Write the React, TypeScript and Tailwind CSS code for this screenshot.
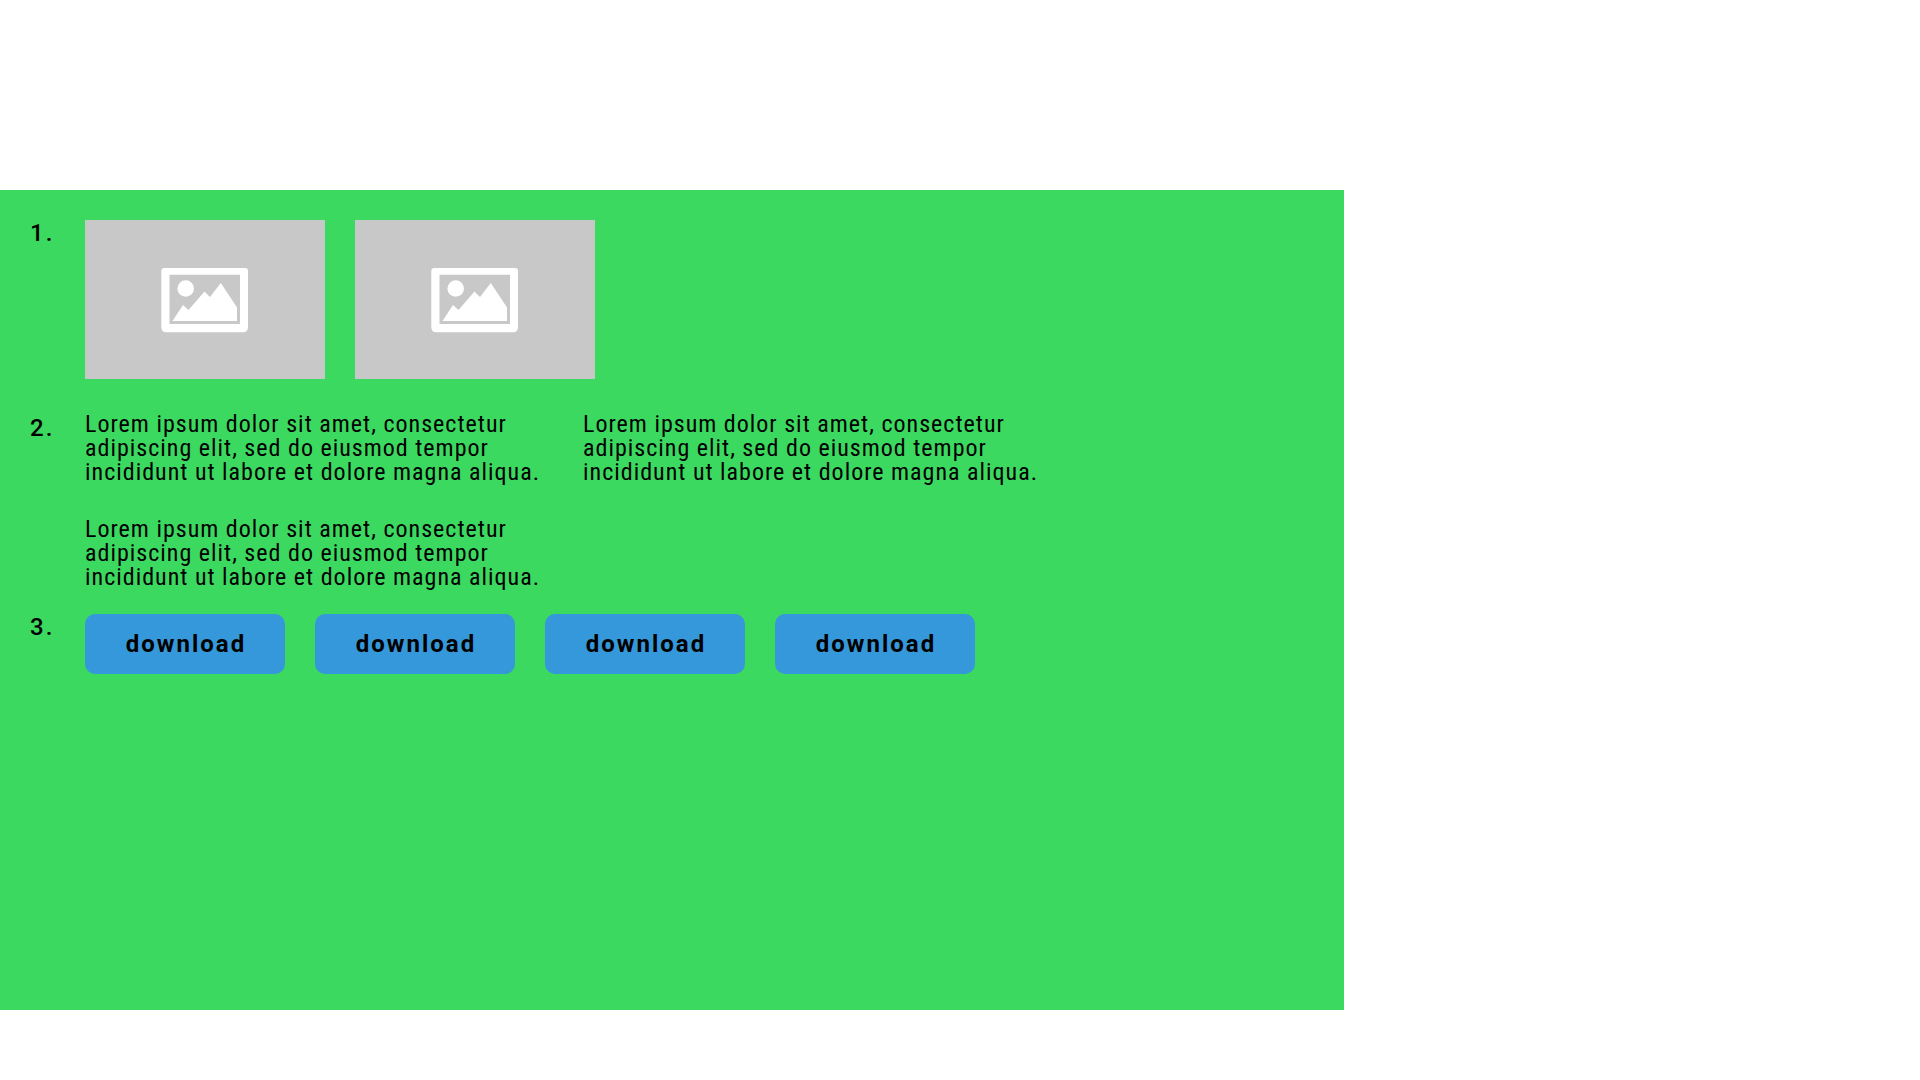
const lorem =
  'Lorem ipsum dolor sit amet, consectetur adipiscing elit, sed do eiusmod tempor incididunt ut labore et dolore magna aliqua.';

function Placeholder() {
  return (
    <svg role="img" aria-label="Placeholder" viewBox="0 0 240 159" className="h-[159px] w-60 bg-[#c8c8c8]">
      <path
        fill="#fff"
        fillRule="evenodd"
        d="M79.300 48H160Q163 48 163 51V107Q163 112.300 158 112.300H81.300Q76.300 112.300 76.300 107V51Q76.300 48 79.300 48ZM84.500 54.700V104H155V54.700Z"
      />
      <circle cx="100.700" cy="68.500" r="8.300" fill="#fff" />
      <path fill="#fff" d="M87.500 101L98 85L103.500 90L119.500 71.500L125 77L135.800 63L152 87.500V101Z" />
    </svg>
  );
}

export default function App() {
  return (
    <main className="pt-[190px] font-['Roboto',sans-serif] text-2xl leading-6 text-black">
      <ol className="flex min-h-[820px] w-[70%] flex-col bg-[#3bd960] px-[30px] pt-[30px]">
        <li className="flex">
          <span className="w-[55px] shrink-0 font-medium leading-[26px] tracking-[2px]">1.</span>
          <div className="flex flex-wrap gap-[30px]">
            <Placeholder />
            <Placeholder />
          </div>
        </li>
        <li className="mt-[33px] flex">
          <span className="mt-[3px] w-[55px] shrink-0 font-medium leading-[26px] tracking-[2px]">2.</span>
          <div className="flex flex-wrap gap-x-[30px] gap-y-[33px] font-['Roboto_Condensed','Roboto',sans-serif] tracking-[1px]">
            <p className="w-[468px]">{lorem}</p>
            <p className="w-[468px]">{lorem}</p>
            <p className="w-[468px]">{lorem}</p>
          </div>
        </li>
        <li className="mt-[25px] flex">
          <span className="w-[55px] shrink-0 font-medium leading-[26px] tracking-[2px]">3.</span>
          <div className="flex flex-wrap gap-[30px]">
            {[1, 2, 3, 4].map((n) => (
              <button key={n} type="button" className="h-[60px] w-[200px] rounded-[10px] bg-[#3498db] pl-0.5 font-bold tracking-[2px]">
                download
              </button>
            ))}
          </div>
        </li>
      </ol>
    </main>
  );
}
